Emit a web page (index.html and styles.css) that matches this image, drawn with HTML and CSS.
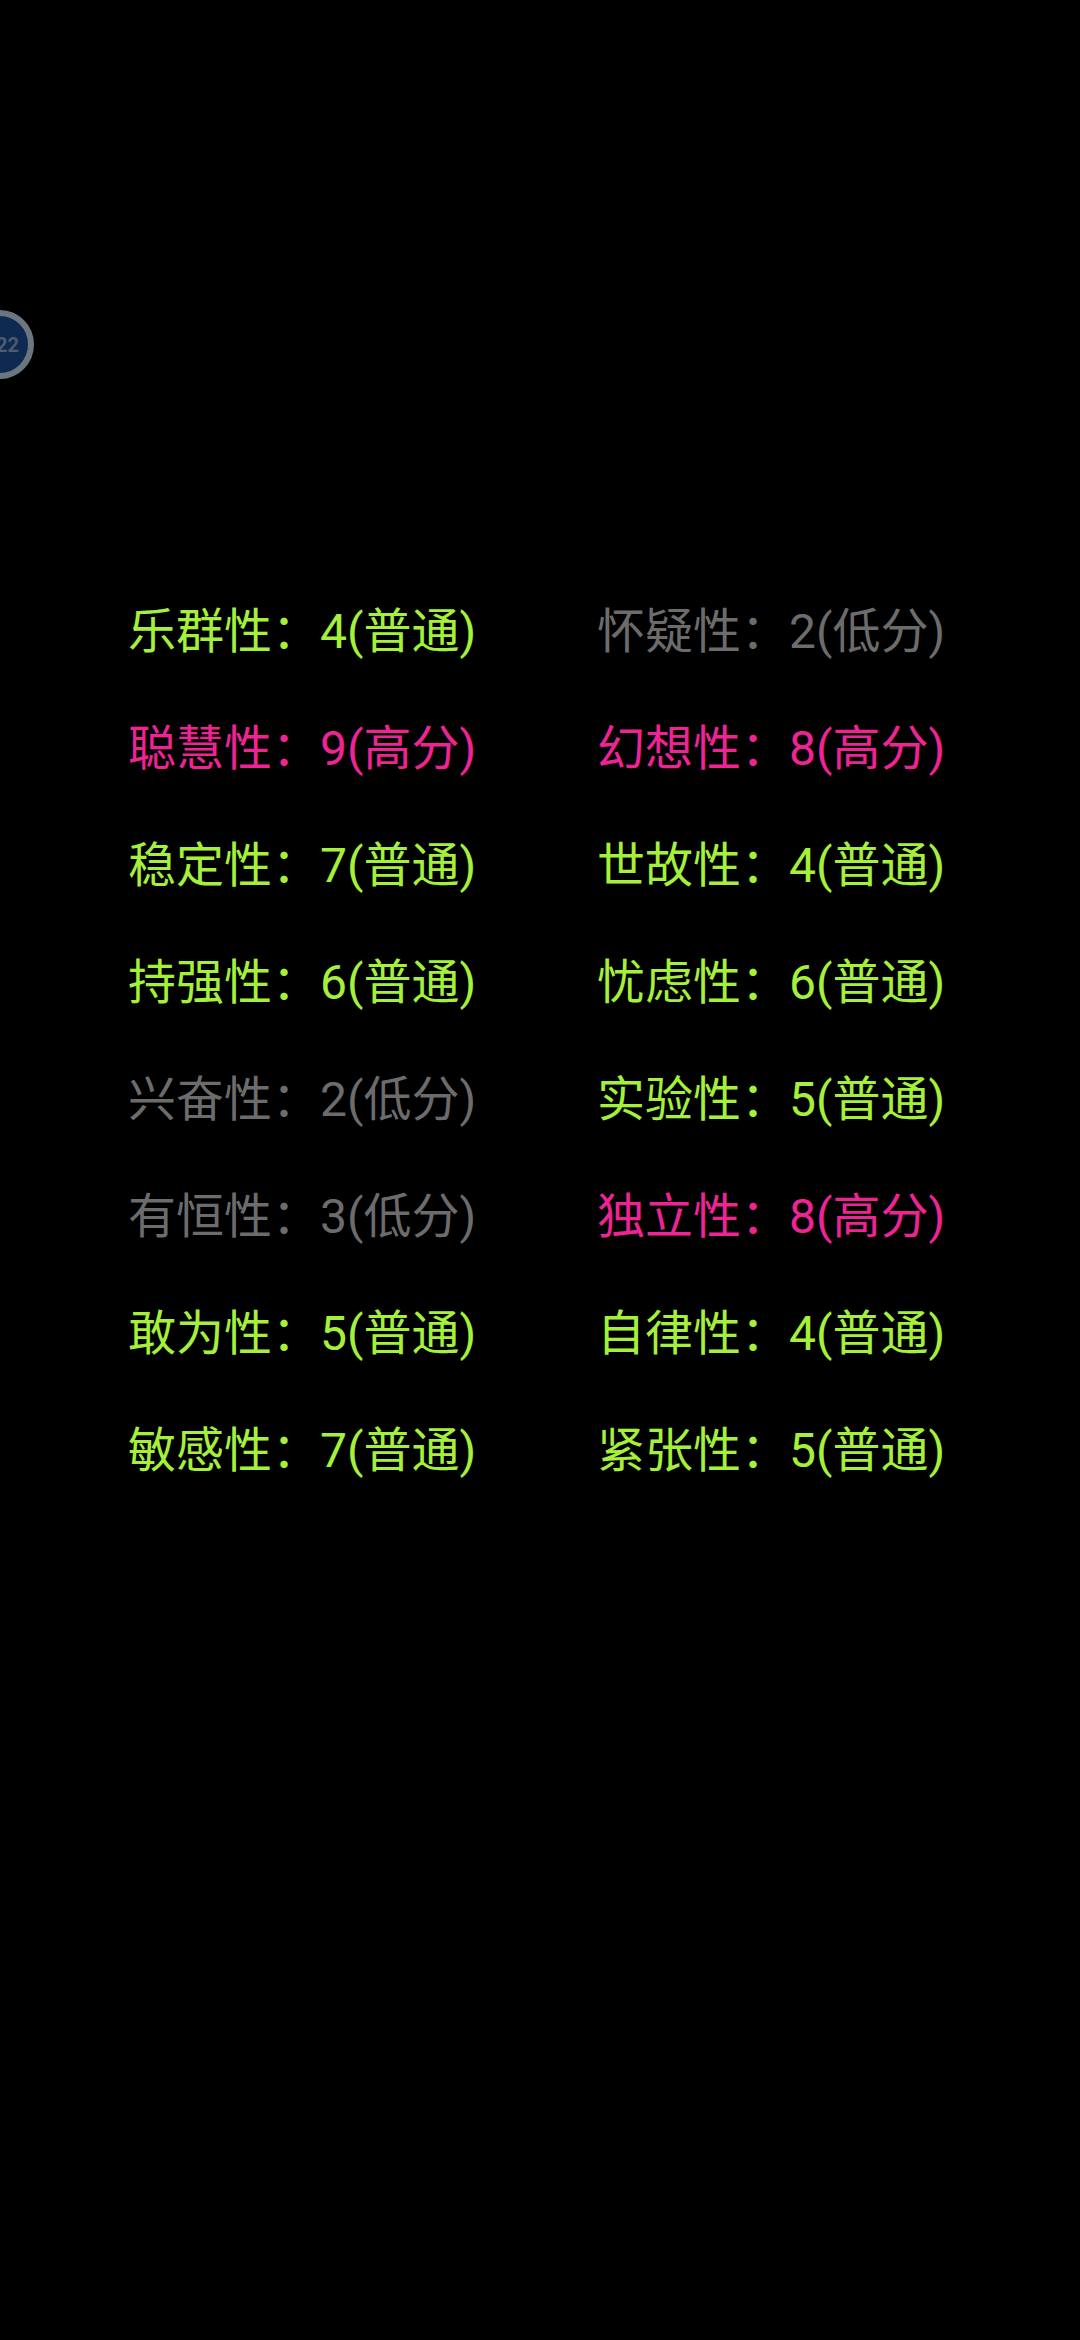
FILE: index.html
```html
<!DOCTYPE html>
<html lang="zh">
<head>
    <meta charset="UTF-8">
    <meta name="viewport" content="width=device-width, initial-scale=1.0">
    <title>16PF</title>
    <link rel="stylesheet" href="styles.css">
</head>
<body>
    <!-- 悬浮球 -->
    <div class="float-ball"><span class="float-text">22</span></div>

    <div class="score-grid">
        <div class="score mid">乐群性：4(普通)</div>
        <div class="score low">怀疑性：2(低分)</div>
        <div class="score high">聪慧性：9(高分)</div>
        <div class="score high">幻想性：8(高分)</div>
        <div class="score mid">稳定性：7(普通)</div>
        <div class="score mid">世故性：4(普通)</div>
        <div class="score mid">持强性：6(普通)</div>
        <div class="score mid">忧虑性：6(普通)</div>
        <div class="score low">兴奋性：2(低分)</div>
        <div class="score mid">实验性：5(普通)</div>
        <div class="score low">有恒性：3(低分)</div>
        <div class="score high">独立性：8(高分)</div>
        <div class="score mid">敢为性：5(普通)</div>
        <div class="score mid">自律性：4(普通)</div>
        <div class="score mid">敏感性：7(普通)</div>
        <div class="score mid">紧张性：5(普通)</div>
    </div>
</body>
</html>
```

FILE: styles.css
```css
:root {
    --mid-color: #a4f03a;
    --high-color: #ee2394;
    --low-color: #6c6c6c;
}

html, body {
    margin: 0;
    height: 100%;
    background: #000;
}

body {
    width: 1080px;
    height: 2340px;
    overflow: hidden;
    font-family: Roboto, "Noto Sans CJK SC", sans-serif;
}

.float-ball {
    position: absolute;
    left: -35px;
    top: 310px;
    width: 69px;
    height: 69px;
    box-sizing: border-box;
    border: 6px solid #6c7680;
    border-radius: 50%;
    background: #0f2a50;
    display: flex;
    align-items: center;
    justify-content: flex-end;
    padding-right: 9px;
}

.float-text {
    color: #4d5c6e;
    font-size: 20px;
    font-weight: 700;
}

.score-grid {
    display: grid;
    grid-template-columns: 469px auto;
    grid-auto-rows: 117px;
    padding: 573px 0 0 128px;
}

.score {
    font-size: 48px;
    line-height: 117px;
    white-space: nowrap;
}

.mid { color: var(--mid-color); }
.high { color: var(--high-color); }
.low { color: var(--low-color); }
```
